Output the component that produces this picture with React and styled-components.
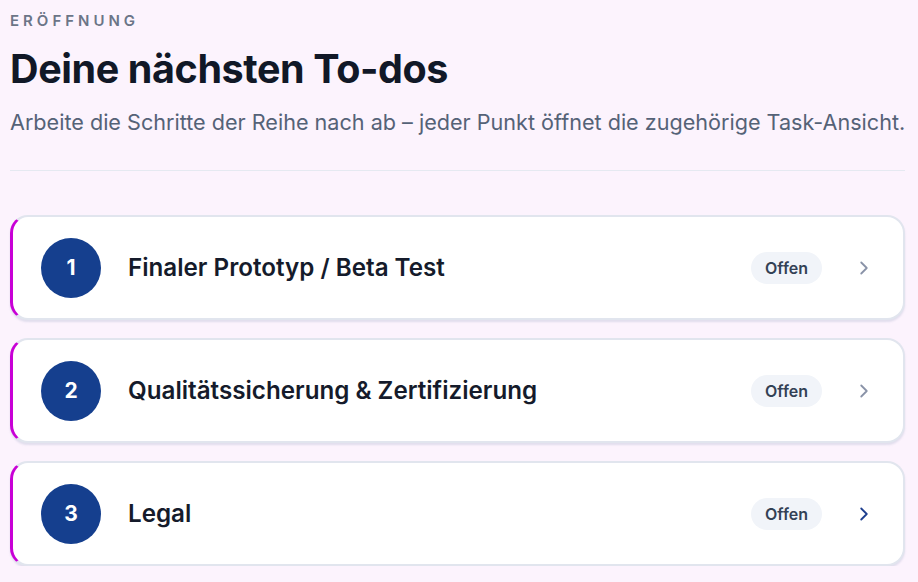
import styled, { createGlobalStyle } from "styled-components";

const todos = [
  { id: 1, title: "Finaler Prototyp / Beta Test", status: "Offen" },
  { id: 2, title: "Qualitätssicherung & Zertifizierung", status: "Offen" },
  { id: 3, title: "Legal", status: "Offen", active: true },
];

const Chevron = ({ active }) => (
  <ChevronIcon viewBox="0 0 24 24" $active={active}>
    <path d="M9 6l6 6-6 6" />
  </ChevronIcon>
);

const App = () => {
  return (
    <>
      <GlobalStyle />
      <Page>
        <Eyebrow>Eröffnung</Eyebrow>
        <Heading>Deine nächsten To-dos</Heading>
        <Lead>
          Arbeite die Schritte der Reihe nach ab – jeder Punkt öffnet die
          zugehörige Task-Ansicht.
        </Lead>
        <Divider />
        <List>
          {todos.map((todo) => (
            <Card key={todo.id}>
              <Number>{todo.id}</Number>
              <Title>{todo.title}</Title>
              <Badge>{todo.status}</Badge>
              <Chevron active={todo.active} />
            </Card>
          ))}
        </List>
      </Page>
    </>
  );
};

const GlobalStyle = createGlobalStyle`
  body {
    margin: 0;
    background: #fcf3fd;
    font-family: Inter, "Noto Sans", sans-serif;
    color: #111827;
  }
`;

const Page = styled.div`
  padding: 11px 13px 0 10px;
`;

const Eyebrow = styled.div`
  font-size: 15px;
  font-weight: 600;
  letter-spacing: 4px;
  text-transform: uppercase;
  color: #6b7587;
  line-height: 20px;
`;

const Heading = styled.h1`
  margin: 14px 0 0;
  font-size: 39.5px;
  font-weight: 700;
  letter-spacing: -0.4px;
  line-height: 48px;
  color: #111827;
`;

const Lead = styled.p`
  margin: 14px 0 0;
  font-size: 21.6px;
  line-height: 30px;
  white-space: nowrap;
  color: #556277;
`;

const Divider = styled.hr`
  margin: 33px 0 0;
  border: 0;
  border-top: 1px solid #e5e9f1;
`;

const List = styled.div`
  margin-top: 44px;
  display: flex;
  flex-direction: column;
  gap: 18px;
`;

const Card = styled.div`
  height: 105px;
  box-sizing: border-box;
  display: flex;
  align-items: center;
  padding: 0 28px 0 28px;
  background: #fff;
  border: 2px solid #e1e5ee;
  border-left: 3px solid #c800d6;
  border-radius: 18px;
  box-shadow: 0 2px 2px rgba(148, 160, 190, 0.25);
  cursor: pointer;
`;

const Number = styled.div`
  width: 60px;
  height: 60px;
  flex-shrink: 0;
  border-radius: 50%;
  background: #153f8e;
  color: #fff;
  display: flex;
  align-items: center;
  justify-content: center;
  font-size: 21px;
  font-weight: 700;
`;

const Title = styled.div`
  flex: 1;
  margin-left: 27px;
  font-size: 24.2px;
  font-weight: 600;
  color: #151b2b;
`;

const Badge = styled.span`
  padding: 6px 14px;
  border-radius: 999px;
  background: #f1f4f9;
  font-size: 16px;
  font-weight: 600;
  color: #334155;
  line-height: 20px;
`;

const ChevronIcon = styled.svg`
  width: 22px;
  height: 22px;
  margin-left: 31px;
  fill: none;
  stroke: ${(p) => (p.$active ? "#1e3f8f" : "#8a93a8")};
  stroke-width: 2;
  stroke-linecap: round;
  stroke-linejoin: round;
`;

export default App;
